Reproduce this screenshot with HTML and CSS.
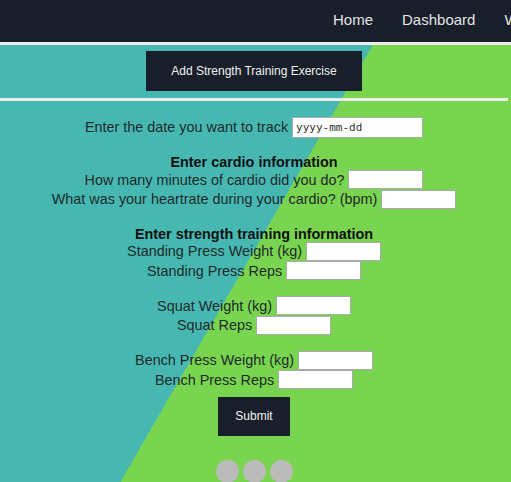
FILE: index.html
```html
<!DOCTYPE html>
<html lang="en">
<head>
<meta charset="utf-8">
<title>Workout Tracker</title>
<link rel="stylesheet" href="styles.css">
</head>
<body>
<nav class="nav">
  <ul class="nav-links">
    <li class="nav-item">Home</li>
    <li class="nav-item">Dashboard</li>
    <li class="nav-item">Workouts</li>
  </ul>
</nav>
<div class="page">
  <section class="action-bar">
    <button class="btn btn-add" type="button">Add Strength Training Exercise</button>
  </section>
  <form class="tracker">
    <div class="row row-date">
      <label class="label">Enter the date you want to track</label>
      <input class="input input-date" type="text" placeholder="yyyy-mm-dd">
    </div>

    <h3 class="heading">Enter cardio information</h3>
    <div class="row">
      <label class="label">How many minutes of cardio did you do?</label>
      <input class="input" type="text">
    </div>
    <div class="row">
      <label class="label">What was your heartrate during your cardio? (bpm)</label>
      <input class="input" type="text">
    </div>

    <h3 class="heading">Enter strength training information</h3>
    <div class="group">
      <div class="row">
        <label class="label">Standing Press Weight (kg)</label>
        <input class="input" type="text">
      </div>
      <div class="row">
        <label class="label">Standing Press Reps</label>
        <input class="input" type="text">
      </div>
    </div>
    <div class="group group-spaced">
      <div class="row">
        <label class="label">Squat Weight (kg)</label>
        <input class="input" type="text">
      </div>
      <div class="row">
        <label class="label">Squat Reps</label>
        <input class="input" type="text">
      </div>
    </div>
    <div class="group group-spaced">
      <div class="row">
        <label class="label">Bench Press Weight (kg)</label>
        <input class="input" type="text">
      </div>
      <div class="row">
        <label class="label">Bench Press Reps</label>
        <input class="input" type="text">
      </div>
    </div>
    <button class="btn btn-submit" type="button">Submit</button>
  </form>
  <footer class="social">
    <span class="dot"></span>
    <span class="dot"></span>
    <span class="dot"></span>
  </footer>
</div>
</body>
</html>
```
FILE: styles.css
```css
* {
  box-sizing: border-box;
}

html,
body {
  margin: 0;
  height: 100%;
}

body {
  font-family: "Liberation Sans", Arial, sans-serif;
  overflow: hidden;
}

.nav {
  height: 45px;
  background: #181f2b;
  border-bottom: 3px solid #ececec;
  display: flex;
  overflow: hidden;
}

.nav-links {
  list-style: none;
  margin: 0;
  padding: 0 0 0 318.5px;
  display: flex;
  flex-shrink: 0;
  white-space: nowrap;
}

.nav-item {
  padding: 0 14.5px;
  font-size: 15px;
  line-height: 40px;
  color: #e4e4e4;
}

.page {
  min-height: calc(100% - 45px);
  padding-right: 3px;
  background: linear-gradient(120deg, #47b8b1 calc(50% - 8px), #79d44f calc(50% - 8px));
  display: flex;
  flex-direction: column;
}

.action-bar {
  padding: 6px 0 7px;
  border-bottom: 3px solid #ececec;
  display: flex;
  justify-content: center;
}

.btn {
  background: #181f2b;
  color: #f0f0f0;
  border: none;
  padding: 0;
  font-family: "Liberation Sans", Arial, sans-serif;
  font-size: 12px;
  cursor: pointer;
}

.btn-add {
  width: 216px;
  height: 40px;
}

.tracker {
  padding-top: 15.5px;
  display: flex;
  flex-direction: column;
  align-items: center;
  font-size: 14.4px;
  color: #202a2a;
}

.group {
  align-self: stretch;
  display: flex;
  flex-direction: column;
  align-items: center;
}

.row {
  display: flex;
  align-items: center;
  gap: 4px;
  height: 19.5px;
}

.row-date {
  height: 21px;
}

.label {
  line-height: 16.5px;
}

.input {
  width: 75px;
  height: 19px;
  border: 1px solid #a9a9b0;
  background: #fff;
  padding: 0 3px;
  margin: 0;
}

.input-date {
  width: 131px;
  height: 21px;
  font-family: "DejaVu Sans Mono", monospace;
  font-size: 11px;
  color: #333;
}

.input-date::placeholder {
  color: #333;
  opacity: 1;
}

.heading {
  margin: 16.5px 0 0;
  font-size: 14.4px;
  font-weight: bold;
  line-height: 16px;
  color: #111;
}

.group-spaced {
  margin-top: 15.5px;
}

.btn-submit {
  margin-top: 7px;
  width: 72px;
  height: 39px;
}

.social {
  margin-top: 24px;
  display: flex;
  justify-content: center;
  gap: 4px;
}

.dot {
  width: 23px;
  height: 23px;
  border-radius: 50%;
  background: #bbbbbb;
}
```
